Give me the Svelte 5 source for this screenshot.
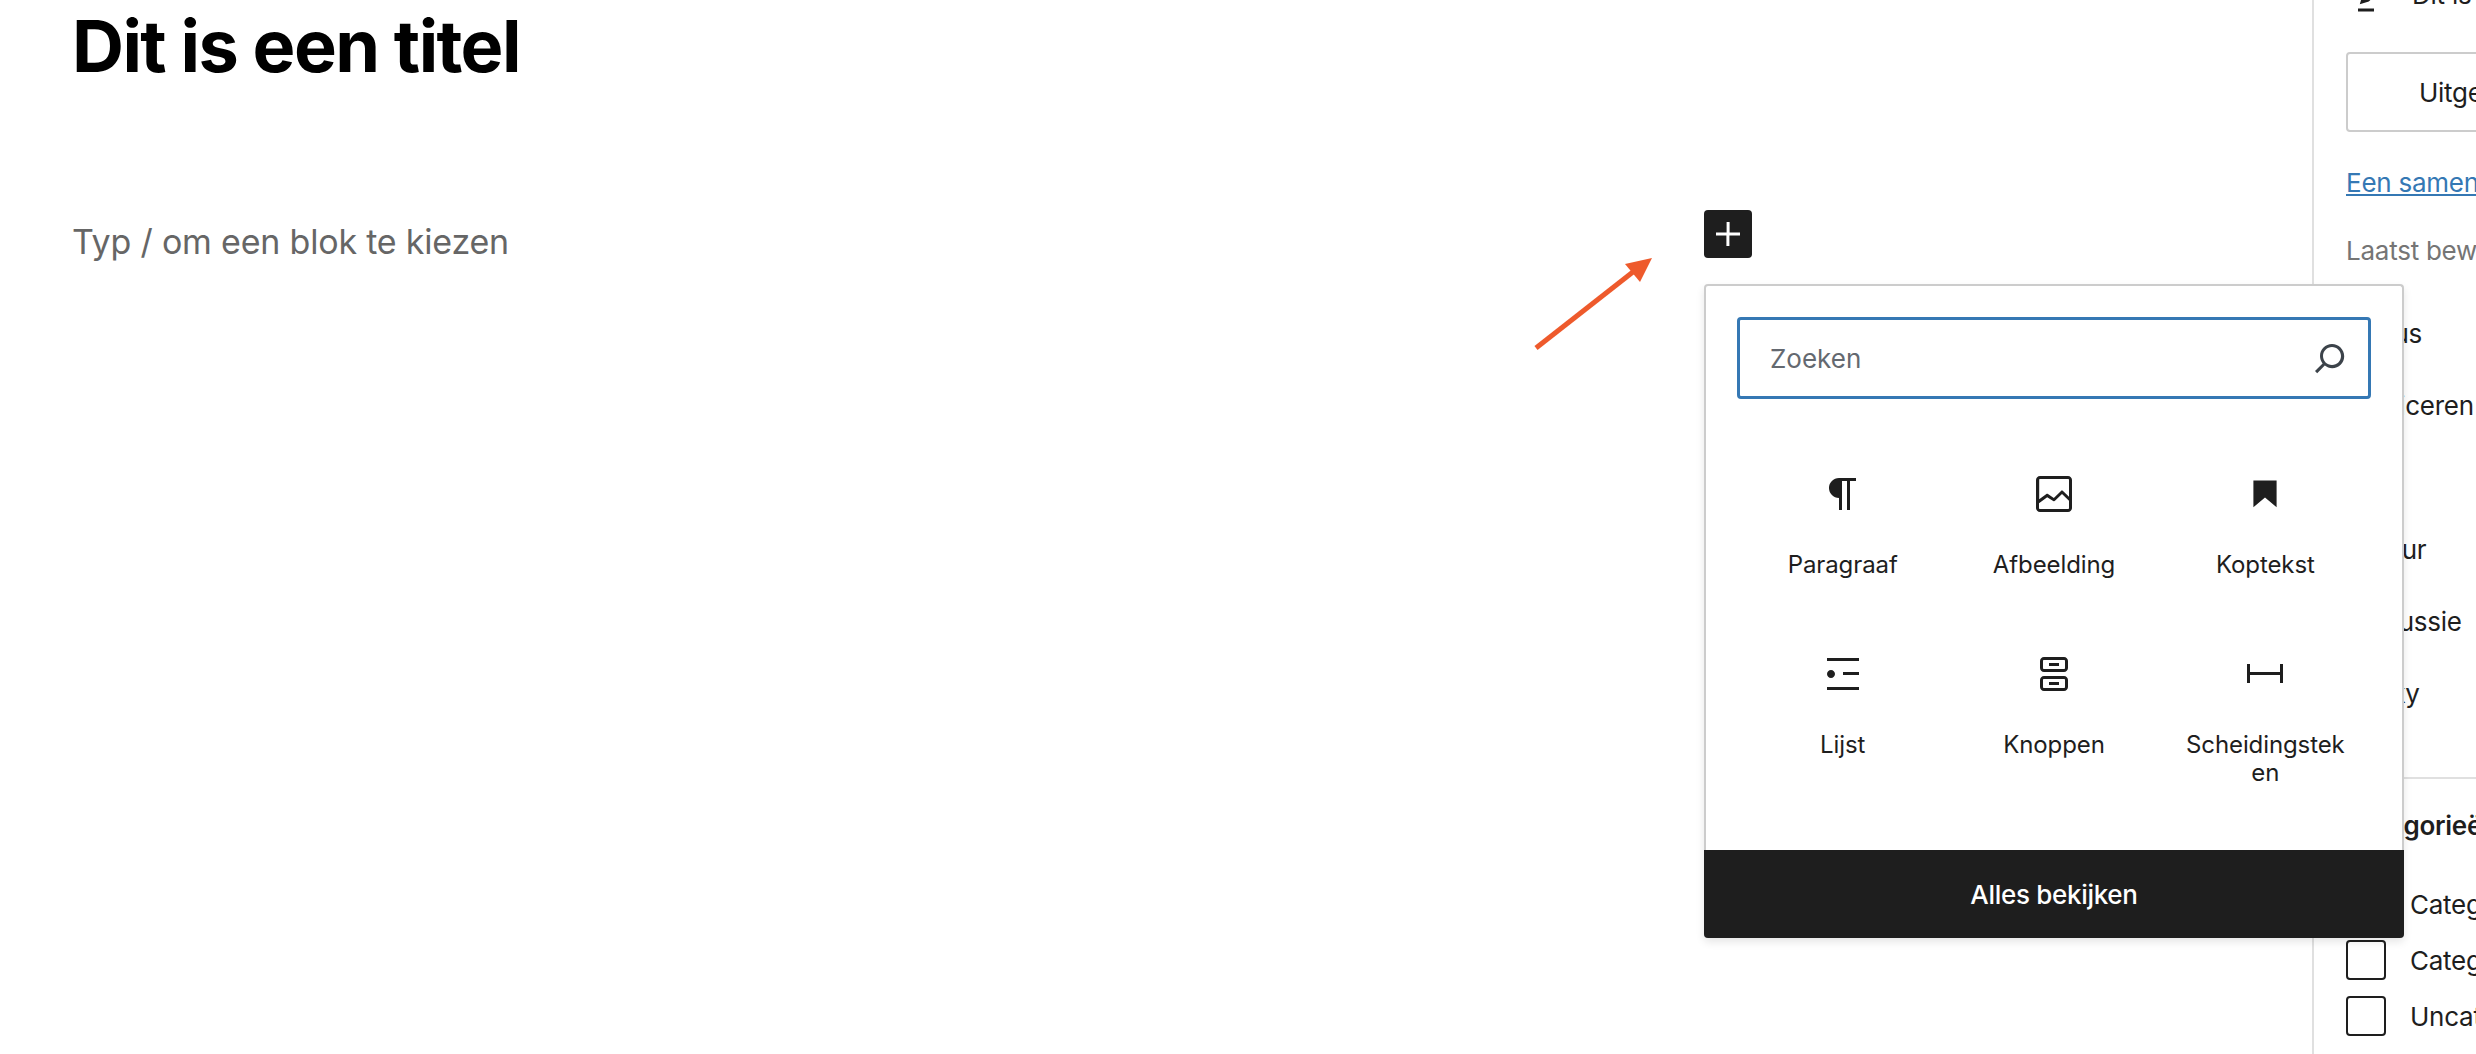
<script>
	const rows = ['Status', 'Publiceren', 'Slug', 'Auteur', 'Discussie', 'Sticky'];
	const categories = ['Categorie 1', 'Categorie 2', 'Uncategorized'];
	const blocks = [
		{ label: 'Paragraaf', d: 'm9.99609 14v-.2251l.00391.0001v6.225h1.5v-14.5h2.5v14.5h1.5v-14.5h3v-1.5h-8.50391c-2.76142 0-5 2.23858-5 5 0 2.7614 2.23858 5 5 5z' },
		{ label: 'Afbeelding', d: 'M19 3H5c-1.1 0-2 .9-2 2v14c0 1.1.9 2 2 2h14c1.1 0 2-.9 2-2V5c0-1.1-.9-2-2-2zM5 4.5h14c.3 0 .5.2.5.5v8.4l-3-2.9c-.3-.3-.8-.3-1 0L11.9 14 9 12c-.3-.2-.6-.2-.8 0l-3.6 2.6V5c-.1-.3.1-.5.4-.5zm14 15H5c-.3 0-.5-.2-.5-.5v-2.4l4.1-3 3 1.9c.3.2.7.2.9-.1L16 12l3.5 3.4V19c0 .3-.2.5-.5.5z' },
		{ label: 'Koptekst', d: 'M6.2 5.2v13.4l5.8-4.8 5.8 4.8V5.2z' },
		{ label: 'Lijst', d: 'M4 4v1.5h16V4H4zm8 8.5h8V11h-8v1.5zM4 20h16v-1.5H4V20zm4-8c0-1.1-.9-2-2-2s-2 .9-2 2 .9 2 2 2 2-.9 2-2z' },
		{ label: 'Knoppen', d: 'M7 3.5h10c1.1 0 2 .9 2 2V9c0 1.1-.9 2-2 2H7c-1.1 0-2-.9-2-2V5.5c0-1.1.9-2 2-2zm0 1.5c-.3 0-.5.2-.5.5V9c0 .3.2.5.5.5h10c.3 0 .5-.2.5-.5V5.5c0-.3-.2-.5-.5-.5H7zm2.5 1.5h5V8h-5V6.5zM7 13h10c1.1 0 2 .9 2 2v3.5c0 1.1-.9 2-2 2H7c-1.1 0-2-.9-2-2V15c0-1.1.9-2 2-2zm0 1.5c-.3 0-.5.2-.5.5v3.5c0 .3.2.5.5.5h10c.3 0 .5-.2.5-.5V15c0-.3-.2-.5-.5-.5H7zm2.5 1.5h5v1.5h-5V16z' },
		{ label: 'Scheidingsteken', d: 'M4.5 12.5v4H3V7h1.5v3.987h15V7H21v9.5h-1.5v-4h-15Z' }
	];
</script>

<div class="page">
	<main class="editor">
		<h1>Dit is een titel</h1>
		<p class="placeholder">Typ / om een blok te kiezen</p>
	</main>

	<aside class="sidebar">
		<div class="post-title">
			<svg viewBox="0 0 24 24" width="48" height="48"><path d="M20.1 5.1L16.9 2 6.2 12.7l-1.3 4.4 4.5-1.3L20.1 5.1zM4 20.8h8v-1.5H4v1.5z" /></svg>
			<span>Dit is een titel</span>
		</div>
		<button class="publish">Uitgelichte afbeelding instellen</button>
		<a class="summary" href="#samenvatting">Een samenvatting toevoegen</a>
		<p class="modified">Laatst bewerkt: zojuist</p>
		<ul class="meta">
			{#each rows as row}
				<li>{row}</li>
			{/each}
		</ul>
		<section class="categories">
			<h2>Categorieën</h2>
			{#each categories as cat}
				<label class="cat">
					<span class="box"></span>
					{cat}
				</label>
			{/each}
		</section>
	</aside>

	<button class="inserter" aria-label="Blok toevoegen">
		<svg viewBox="0 0 24 24" width="48" height="48"><path d="M18 11.2h-5.2V6h-1.5v5.2H6v1.5h5.2V18h1.5v-5.2H18z" /></svg>
	</button>

	<svg class="arrow" viewBox="0 0 130 100" width="130" height="100">
		<line x1="6" y1="92" x2="108" y2="12" />
		<polygon points="122,2 95,8 110,26" />
	</svg>

	<div class="popover">
		<div class="search">
			<span>Zoeken</span>
			<svg viewBox="0 0 24 24" width="48" height="48"><path d="M13 5c-3.3 0-6 2.7-6 6 0 1.4.5 2.7 1.3 3.7l-3.8 3.8 1.1 1.1 3.8-3.8c1 .8 2.3 1.3 3.7 1.3 3.3 0 6-2.7 6-6S16.3 5 13 5zm0 10.5c-2.5 0-4.5-2-4.5-4.5s2-4.5 4.5-4.5 4.5 2 4.5 4.5-2 4.5-4.5 4.5z" /></svg>
		</div>
		<div class="blocks">
			{#each blocks as block}
				<div class="block">
					<svg viewBox="0 0 24 24" width="48" height="48"><path d={block.d} /></svg>
					<span>{block.label}</span>
				</div>
			{/each}
		</div>
		<div class="browse">Alles bekijken</div>
	</div>
</div>

<style>
	:global(body) {
		background: #fff;
		overflow: hidden;
	}

	.page {
		position: relative;
		display: flex;
		width: 2476px;
		height: 1054px;
		overflow: hidden;
		font-family: Inter, "Liberation Sans", sans-serif;
		color: #1e1e1e;
	}

	svg {
		display: block;
		fill: #1e1e1e;
	}

	.editor {
		flex: 0 0 2312px;
		padding-left: 72px;
		box-sizing: border-box;
	}

	h1 {
		margin: 2px 0 0;
		font-size: 72px;
		line-height: 88px;
		font-weight: 700;
		letter-spacing: -1.6px;
		color: #000;
	}

	.placeholder {
		margin: 128px 0 0;
		font-size: 34px;
		line-height: 48px;
		letter-spacing: -0.2px;
		color: #666;
	}

	.sidebar {
		flex: 0 0 560px;
		box-sizing: border-box;
		border-left: 2px solid #e0e0e0;
		padding-left: 32px;
		font-size: 26px;
		letter-spacing: -0.25px;
	}

	.post-title {
		display: flex;
		align-items: center;
		gap: 14px;
		height: 48px;
		margin-top: -30px;
		margin-left: 4px;
		white-space: nowrap;
	}

	.publish {
		display: block;
		width: 516px;
		height: 80px;
		margin-top: 34px;
		border: 2px solid #ccc;
		border-radius: 4px;
		background: #fff;
		font: inherit;
		letter-spacing: inherit;
		color: #1e1e1e;
		white-space: nowrap;
	}

	.summary {
		display: block;
		margin-top: 33px;
		line-height: 36px;
		color: #3578b4;
		white-space: nowrap;
	}

	.modified {
		margin: 32px 0 0;
		line-height: 36px;
		color: #757575;
		white-space: nowrap;
	}

	.meta {
		list-style: none;
		margin: 29px 0 0;
		padding: 0;
	}

	.meta li {
		height: 72px;
		line-height: 72px;
	}

	.categories {
		margin: 47px 0 0 -32px;
		padding: 29px 0 0 32px;
		border-top: 2px solid #e0e0e0;
	}

	h2 {
		margin: 0 0 32px;
		font-size: 26px;
		line-height: 36px;
		font-weight: 600;
	}

	.cat {
		display: flex;
		align-items: center;
		gap: 24px;
		height: 56px;
		white-space: nowrap;
	}

	.box {
		box-sizing: border-box;
		width: 40px;
		height: 40px;
		border: 2px solid #1e1e1e;
		border-radius: 4px;
		background: #fff;
	}

	.inserter {
		position: absolute;
		left: 1704px;
		top: 210px;
		width: 48px;
		height: 48px;
		padding: 0;
		border: none;
		border-radius: 4px;
		background: #1e1e1e;
	}

	.inserter svg {
		fill: #fff;
	}

	.arrow {
		position: absolute;
		left: 1530px;
		top: 256px;
		fill: #ee5a2c;
	}

	.arrow line {
		stroke: #ee5a2c;
		stroke-width: 5;
	}

	.popover {
		position: absolute;
		left: 1704px;
		top: 284px;
		box-sizing: border-box;
		display: flex;
		flex-direction: column;
		width: 700px;
		height: 654px;
		padding-top: 31px;
		border: 2px solid #ccc;
		border-bottom: none;
		border-radius: 4px;
		background: #fff;
		box-shadow: 0 4px 8px rgba(0, 0, 0, 0.1);
	}

	.search {
		box-sizing: border-box;
		display: flex;
		align-items: center;
		justify-content: space-between;
		height: 82px;
		margin: 0 31px;
		padding: 0 14px 0 30px;
		border: 3px solid #3578b4;
		border-radius: 4px;
		font-size: 26px;
		color: #646970;
	}

	.search svg {
		fill: #3c434a;
	}

	.blocks {
		display: grid;
		grid-template-columns: repeat(3, 1fr);
		grid-auto-rows: 180px;
		margin: 71px 31px 0;
	}

	.block {
		display: flex;
		flex-direction: column;
		align-items: center;
		gap: 33px;
		padding: 0 24px;
		font-size: 24px;
		line-height: 28px;
		letter-spacing: -0.1px;
		text-align: center;
		overflow-wrap: anywhere;
	}

	.browse {
		margin: auto -2px 0;
		height: 88px;
		line-height: 90px;
		border-radius: 0 0 4px 4px;
		background: #1e1e1e;
		color: #fff;
		font-size: 26px;
		font-weight: 500;
		letter-spacing: -0.3px;
		text-align: center;
	}
</style>
